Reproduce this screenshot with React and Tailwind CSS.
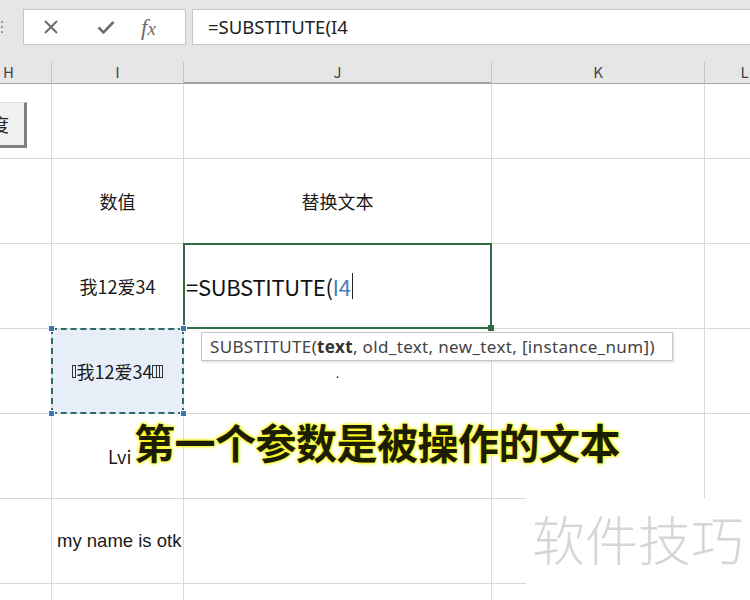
import React from 'react';

const cjk = { fontFamily: '"Noto Sans CJK SC", "Noto Sans", sans-serif' };
const ui = { fontFamily: '"Noto Sans", "Noto Sans CJK SC", sans-serif' };

function Cell({ children, className = '' }) {
  return (
    <div className={`border-r border-b border-[#d9d9d9] flex items-center justify-center text-[18px] text-[#1a1a1a] ${className}`}>
      {children}
    </div>
  );
}

function HeaderCell({ children, className = '' }) {
  return (
    <div className={`border-r border-[#c6c6c6] border-b border-b-[#a6a6a6] bg-[#e6e6e6] flex items-center justify-center text-[15px] text-[#444] ${className}`}>
      {children}
    </div>
  );
}

function Handle({ className }) {
  return <div className={`absolute w-[7px] h-[7px] bg-[#3f72b8] border border-white ${className}`} />;
}

export default function App() {
  return (
    <div className="relative w-[750px] h-[600px] overflow-hidden bg-white" style={cjk}>
      {/* formula bar */}
      <div className="h-[62px] bg-[#e6e6e6] flex items-start pt-[9px]">
        <div className="w-[23px] h-[36px] flex flex-col items-start justify-center gap-[3px] pl-px">
          <span className="w-[2px] h-[2px] bg-[#999]" />
          <span className="w-[2px] h-[2px] bg-[#999]" />
          <span className="w-[2px] h-[2px] bg-[#999]" />
        </div>
        <div className="w-[163px] h-[36px] bg-white border border-[#c6c6c6] flex items-center">
          <svg className="ml-[19px]" width="16" height="16" viewBox="0 0 16 16">
            <path d="M2 2 L14 14 M14 2 L2 14" stroke="#6d6d6d" strokeWidth="2" />
          </svg>
          <svg className="ml-[38px]" width="18" height="16" viewBox="0 0 18 16">
            <path d="M1.5 8.5 L6.5 13.5 L16.5 3" stroke="#6d6d6d" strokeWidth="2.6" fill="none" />
          </svg>
          <span className="ml-[26px] text-[23px] leading-none italic text-[#6d6d6d]" style={{ fontFamily: '"Liberation Serif", serif' }}>
            f<span className="text-[19px]">x</span>
          </span>
        </div>
        <div className="ml-[6px] flex-1 h-[36px] bg-white border border-[#c6c6c6] border-r-0 flex items-center pl-[15px] text-[18.5px] text-[#222]" style={ui}>
          =SUBSTITUTE(I4
        </div>
      </div>

      {/* sheet */}
      <div className="grid grid-cols-[52px_132px_308px_213px_80px] grid-rows-[22px_75px_85px_85px_85px_85px_85px_85px] w-[785px]">
        <HeaderCell className="justify-start pl-[3px]">H</HeaderCell>
        <HeaderCell>I</HeaderCell>
        <HeaderCell className="bg-[#d2d2d2] border-b-2 border-b-[#217346]">J</HeaderCell>
        <HeaderCell>K</HeaderCell>
        <HeaderCell>L</HeaderCell>

        {/* row 3 */}
        <Cell className="justify-start">
          <div className="w-[27px] h-[46px] mt-[8px] bg-[#f0f0f0] border-r-[3px] border-b-[3px] border-[#7f7f7f] border-t border-t-[#e0e0e0] flex items-center justify-end overflow-hidden">
            <span className="text-[18px] text-[#222] mr-[15px] shrink-0">度</span>
          </div>
        </Cell>
        <Cell />
        <Cell />
        <Cell />
        <Cell />

        {/* row 4 */}
        <Cell />
        <Cell>数值</Cell>
        <Cell>替换文本</Cell>
        <Cell />
        <Cell />

        {/* row 5 */}
        <Cell />
        <Cell>我12爱34</Cell>
        <Cell className="relative justify-start">
          <div className="absolute -top-px -left-px -right-px -bottom-px border-2 border-[#2f6b45]" />
          <div className="absolute -right-[3px] -bottom-[3px] w-[6px] h-[6px] bg-[#2f6b45]" />
          <span className="pl-[2px] text-[22px] text-[#111] flex items-center tracking-[-0.3px]">
            =SUBSTITUTE(<span className="text-[#4a7ebb]">I4</span>
            <span className="ml-px w-px h-[26px] bg-[#222]" />
          </span>
        </Cell>
        <Cell />
        <Cell />

        {/* row 6 */}
        <Cell />
        <Cell className="relative bg-[#e8eef8]">
          <div className="absolute -top-px -left-px -right-px -bottom-px border-2 border-dashed border-[#2c6a6c]" />
          <Handle className="-top-[4px] -left-[4px]" />
          <Handle className="-top-[4px] -right-[4px]" />
          <Handle className="-bottom-[4px] -left-[4px]" />
          <Handle className="-bottom-[4px] -right-[4px]" />
          <span className="flex items-center">
            <span className="inline-block w-[4px] h-[13px] border border-[#333] mr-px" />
            我12爱34
            <span className="inline-flex w-[11px] h-[13px] border border-[#333] justify-evenly">
              <span className="w-px h-full bg-[#333]" />
              <span className="w-px h-full bg-[#333]" />
            </span>
          </span>
        </Cell>
        <Cell className="items-start pt-[38px]">
          <span className="text-[12px] leading-none">.</span>
        </Cell>
        <Cell />
        <Cell />

        {/* row 7 */}
        <Cell />
        <Cell className="justify-start pl-[56px]">Lvi</Cell>
        <Cell />
        <Cell />
        <Cell />

        {/* row 8 */}
        <Cell />
        <Cell className="justify-start pl-[5px]">
          <span style={{ fontFamily: '"Liberation Sans Narrow", "Liberation Sans", sans-serif' }} className="text-[18.5px]">my name is otk</span>
        </Cell>
        <Cell />
        <Cell />
        <Cell />

        {/* row 9 */}
        <Cell />
        <Cell />
        <Cell />
        <Cell />
        <Cell />
      </div>

      {/* argument tooltip */}
      <div className="absolute left-[201px] top-[332px] w-[472px] h-[29px] bg-white border border-[#c6c6c6] shadow-[1px_1px_2px_rgba(0,0,0,0.15)] flex items-center pl-[8px] text-[17px] tracking-[0.35px] text-[#444]" style={ui}>
        SUBSTITUTE(<b className="text-[#333]">text</b>, old_text, new_text, [instance_num])
      </div>

      {/* caption */}
      <div
        className="absolute left-[134px] top-[421px] text-[41px] font-bold text-[#1d1d05] leading-none whitespace-nowrap tracking-[-0.5px]"
        style={{ textShadow: '0 0 2px #f5f500, 0 0 3px #f5f500, 0 0 4px #f5f500' }}
      >
        第一个参数是被操作的文本
      </div>

      {/* watermark */}
      <div className="absolute left-[526px] top-[498px] w-[224px] h-[102px] bg-white flex items-start pt-[14px] pl-[6px]">
        <span className="text-[53px] font-light text-[#d6d6d6] leading-none">软件技巧</span>
      </div>
    </div>
  );
}
